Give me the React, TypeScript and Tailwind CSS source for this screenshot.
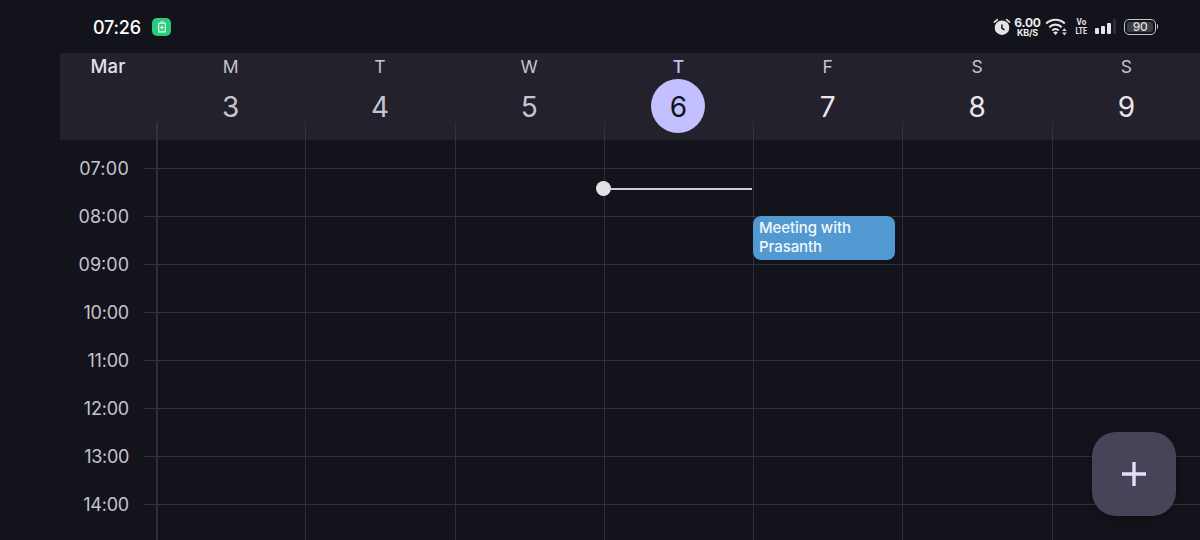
import React from 'react';

const days = [
  { letter: 'M', date: '3', tone: 'text-[#c6c4cf]' },
  { letter: 'T', date: '4', tone: 'text-[#c6c4cf]' },
  { letter: 'W', date: '5', tone: 'text-[#c6c4cf]' },
  { letter: 'T', date: '6', tone: 'text-[#12121b]', today: true },
  { letter: 'F', date: '7', tone: 'text-[#e9e6ee]' },
  { letter: 'S', date: '8', tone: 'text-[#e9e6ee]' },
  { letter: 'S', date: '9', tone: 'text-[#e9e6ee]' },
];

const hours = [
  { label: '07:00', spacing: 'tracking-[0.25px]' },
  { label: '08:00', spacing: 'tracking-[0px]' },
  { label: '09:00', spacing: 'tracking-[0px]' },
  { label: '10:00', spacing: 'tracking-[-0.2px]' },
  { label: '11:00', spacing: 'tracking-[-0.2px]' },
  { label: '12:00', spacing: 'tracking-[-0.2px]' },
  { label: '13:00', spacing: 'tracking-[-0.3px]' },
  { label: '14:00', spacing: 'tracking-[-0.2px]' },
  { label: '', spacing: '' },
];

function AlarmIcon() {
  return (
    <svg className="h-[18px] w-[18px]" viewBox="0 0 18 18" fill="none">
      <circle cx="9" cy="9.7" r="7.3" fill="#e4e4e8" />
      <path d="M1.4 4.2 4.4 1.6M16.6 4.2 13.6 1.6" stroke="#e4e4e8" strokeWidth="1.6" strokeLinecap="round" />
      <path d="M8.9 6.9v3.2l2.1 1.5" stroke="#14141c" strokeWidth="1.5" strokeLinecap="round" />
    </svg>
  );
}

function WifiIcon() {
  return (
    <svg className="h-[18px] w-[24px]" viewBox="0 0 24 18" fill="none">
      <path d="M1.2 5.6a13.2 13.2 0 0 1 18.6 0M4.3 9.2a8.8 8.8 0 0 1 12.4 0M7.3 12.4a4.7 4.7 0 0 1 6.4 0" stroke="#e4e4e8" strokeWidth="2.1" />
      <path d="M8.2 14.5a3.3 3.3 0 0 1 4.6 0l-2.3 2.6z" fill="#e4e4e8" />
      <path d="m17 13 2.4-2.8 2.4 2.8zM17 14.6l2.4 2.8 2.4-2.8z" fill="#d4d4da" />
    </svg>
  );
}

function StatusBar() {
  return (
    <header className="flex h-[53px] shrink-0 items-center pl-[93px] pr-[42px] text-white">
      <span className="w-[59px] whitespace-nowrap pt-[2px] text-[18px] font-medium leading-none tracking-[-0.2px]">07:26</span>
      <span className="flex h-[18px] w-[19px] items-center justify-center rounded-[5px] bg-[#2bcb7d]">
        <svg className="h-3 w-2.5" viewBox="0 0 10 12" fill="none">
          <path d="M3.4 1h3.2M1.7 2.3h6.6v8.6H1.7z" stroke="#e6fff2" strokeWidth="1.1" />
          <path d="M5 4.4v4.2M3.2 6.5h3.6" stroke="#e6fff2" strokeWidth="1.2" />
        </svg>
      </span>
      <div className="ml-auto flex items-center">
        <AlarmIcon />
        <div className="ml-[3px] flex w-[27px] flex-col items-center text-[#ececf0]">
          <span className="text-[12px] font-bold leading-[11px] tracking-[-0.2px]">6.00</span>
          <span className="text-[9px] font-bold leading-[9px] tracking-[-0.2px]">KB/S</span>
        </div>
        <div className="ml-[4px]"><WifiIcon /></div>
        <div className="ml-[6px] flex w-3 flex-col items-center font-['Roboto',sans-serif] text-[9px] font-bold leading-[9px] text-[#e4e4e8]">
          <span className="scale-x-90">Vo</span>
          <span className="scale-x-80">LTE</span>
        </div>
        <div className="ml-[8px] flex h-[15px] w-[22px] items-end gap-[2px]">
          <span className="h-[6px] w-1 rounded-[1px] bg-[#e4e4e8]" />
          <span className="h-[8px] w-1 rounded-[1px] bg-[#e4e4e8]" />
          <span className="h-[11px] w-1 rounded-[1px] bg-[#e4e4e8]" />
          <span className="h-[15px] w-[3px] rounded-[1px] bg-[#2d2d35]" />
        </div>
        <div className="ml-[7px] flex h-4 w-[32px] items-center justify-center rounded-[5px] border-[1.5px] border-[#c4c4ca] p-[2px]">
          <span className="flex h-full w-full items-center justify-center rounded-[2px] bg-[#3d3d44] text-[12px] font-medium leading-none tracking-[-0.3px] text-[#dededf]">90</span>
        </div>
        <span className="ml-px h-[5px] w-px rounded-r bg-[#c4c4ca]" />
      </div>
    </header>
  );
}

function WeekHeader() {
  return (
    <section className="ml-[60px] flex h-[87px] shrink-0 bg-[#22212c]">
      <div className="flex w-[96px] shrink-0 justify-center pt-[2px] text-[18.5px] font-medium leading-[22px] tracking-[0.2px] text-[#e4e1e9]">Mar</div>
      <div className="grid w-[1045px] shrink-0 grid-cols-7">
        {days.map((day, i) => (
          <div key={i} className="relative flex flex-col items-center">
            <span className={`mt-[3px] text-[17.5px] leading-[22px] ${day.today ? 'font-medium text-[#c3c0ff]' : 'text-[#c6c4cf]'}`}>{day.letter}</span>
            <span className={`mt-px flex h-[54px] w-[54px] items-center justify-center rounded-full pt-[2px] text-[28px] leading-none ${day.tone} ${day.today ? 'bg-[#c3c0ff]' : ''}`}>{day.date}</span>
            <span className={`absolute bottom-0 left-0 h-[18px] bg-[#32323c] ${i === 0 ? 'w-[2px]' : 'w-px'}`} />
          </div>
        ))}
      </div>
    </section>
  );
}

function HourGrid() {
  return (
    <section className="relative ml-[60px] min-h-0 flex-1 overflow-hidden">
      {hours.map((hour, i) => (
        <div key={i} className={`flex ${i === 0 ? 'h-[29px]' : 'h-[48px]'}`}>
          <div className="flex w-[84px] shrink-0 items-end justify-end pr-[15px]">
            <span className={`relative translate-y-1/2 text-[18px] leading-[22px] text-[#c6c4cf] ${hour.spacing}`}>{hour.label}</span>
          </div>
          <div className="w-3 shrink-0 border-b border-[#32323b]" />
          <div className="grid w-[1045px] shrink-0 grid-cols-7 border-b border-[#32323b]">
            {days.map((_, d) => (
              <span key={d} className={`border-[#2f2f38] ${d === 0 ? 'border-l-2' : 'border-l'}`} />
            ))}
          </div>
        </div>
      ))}
      <div className="absolute left-[536px] top-[41px] flex items-center">
        <span className="h-[15px] w-[15px] rounded-full bg-[#e4e1e6]" />
        <span className="h-[2px] w-[141px] bg-[#d0cdd3]" />
      </div>
      <article className="absolute left-[692px] top-[75px] h-[46px] w-[144px] rounded-[9px] border border-[#13131b] bg-[#5399d1] pl-[6px] pt-[2px] text-[15px] font-medium leading-[19px] tracking-[-0.08px] text-[#f1f7ff]">
        Meeting with
        <br />
        Prasanth
      </article>
    </section>
  );
}

export default function App() {
  return (
    <main className="relative flex h-[540px] w-[1200px] flex-col overflow-hidden bg-[#13131b] font-['Inter',sans-serif]">
      <StatusBar />
      <WeekHeader />
      <HourGrid />
      <button aria-label="Add event" className="absolute bottom-6 right-6 flex h-[84px] w-[84px] items-center justify-center rounded-[24px] bg-[#454459] shadow-[0_3px_8px_rgba(0,0,0,0.3)]">
        <svg className="h-6 w-6" viewBox="0 0 24 24" fill="none" stroke="#e3dff9" strokeWidth="3.4">
          <path d="M12 0v24M0 12h24" />
        </svg>
      </button>
    </main>
  );
}
